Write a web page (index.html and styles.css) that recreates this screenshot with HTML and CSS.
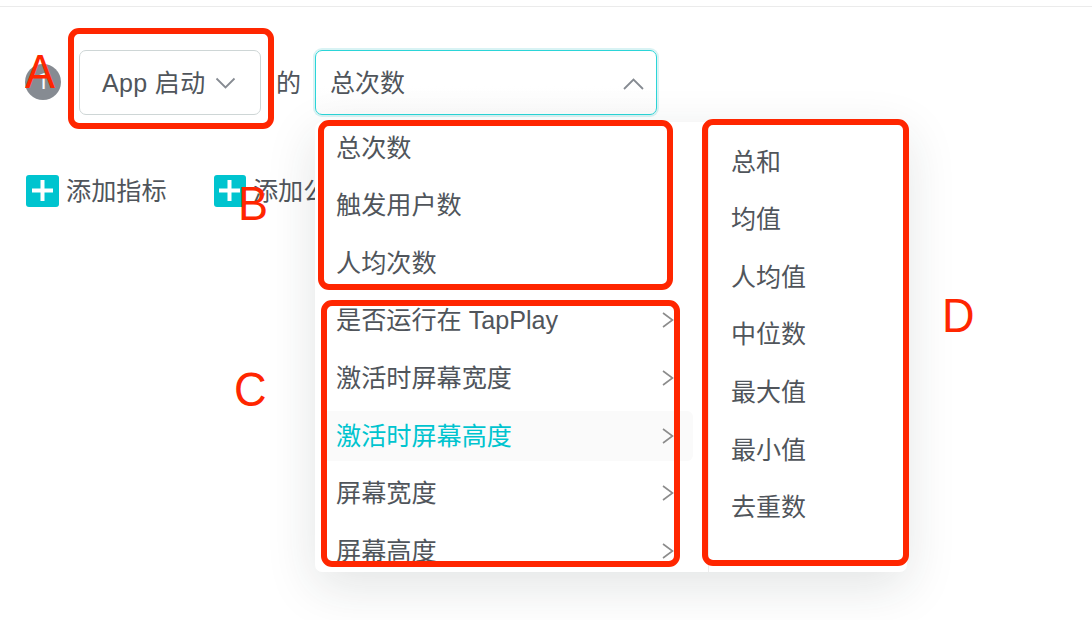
FILE: index.html
```html
<!DOCTYPE html>
<html lang="zh-CN">
<head>
<meta charset="utf-8">
<title>指标</title>
<link rel="stylesheet" href="styles.css">
</head>
<body>
<main class="panel">
  <div class="metric-row">
    <span class="badge">1</span>
    <div class="select select-event">
      <span>App 启动</span>
      <svg class="chevron" width="21" height="14" viewBox="0 0 21 14"><path d="M1.500 2.500 L10.500 11.500 L19.500 2.500"/></svg>
    </div>
    <span class="of">的</span>
    <div class="select select-measure">
      <span>总次数</span>
      <svg class="chevron" width="21" height="14" viewBox="0 0 21 14"><path d="M1 13 L10.500 3.500 L20 13"/></svg>
    </div>
  </div>
  <div class="add-row">
    <div class="add"><svg width="33" height="33" viewBox="0 0 33 33"><rect width="33" height="32" rx="3" fill="#00c4cf"/><path d="M6 15.500H27M16.500 5V26" stroke="#fff" stroke-width="4"/></svg><span>添加指标</span></div>
    <div class="add"><svg width="32" height="33" viewBox="0 0 32 33"><rect width="32" height="32" rx="3" fill="#00c4cf"/><path d="M5 15.500H26M15.500 5V26" stroke="#fff" stroke-width="4"/></svg><span>添加公式</span></div>
  </div>
</main>

<div class="dropdown">
  <ul class="options">
    <li class="option">总次数</li>
    <li class="option">触发用户数</li>
    <li class="option">人均次数</li>
    <li class="option">是否运行在 TapPlay<svg class="arrow" width="12" height="16" viewBox="0 0 12 16"><path d="M1 1L10.500 8L1 15"/></svg></li>
    <li class="option">激活时屏幕宽度<svg class="arrow" width="12" height="16" viewBox="0 0 12 16"><path d="M1 1L10.500 8L1 15"/></svg></li>
    <li class="option active">激活时屏幕高度<svg class="arrow" width="12" height="16" viewBox="0 0 12 16"><path d="M1 1L10.500 8L1 15"/></svg></li>
    <li class="option">屏幕宽度<svg class="arrow" width="12" height="16" viewBox="0 0 12 16"><path d="M1 1L10.500 8L1 15"/></svg></li>
    <li class="option">屏幕高度<svg class="arrow" width="12" height="16" viewBox="0 0 12 16"><path d="M1 1L10.500 8L1 15"/></svg></li>
  </ul>
  <ul class="aggregates">
    <li class="option">总和</li>
    <li class="option">均值</li>
    <li class="option">人均值</li>
    <li class="option">中位数</li>
    <li class="option">最大值</li>
    <li class="option">最小值</li>
    <li class="option">去重数</li>
  </ul>
</div>

<div class="mark mark-a"></div>
<div class="mark mark-b"></div>
<div class="mark mark-c"></div>
<div class="mark mark-d"></div>
<span class="letter letter-a">A</span>
<span class="letter letter-b">B</span>
<span class="letter letter-c">C</span>
<span class="letter letter-d">D</span>
</body>
</html>
```
FILE: styles.css
```css
* { box-sizing: border-box; }

body {
  position: relative;
  margin: 0;
  width: 1092px;
  height: 620px;
  overflow: hidden;
  background: #fff;
  color: #50555b;
  font: 25px/36px "Liberation Sans", "Noto Sans CJK SC", sans-serif;
}

.panel {
  margin-top: 6px;
  padding: 43px 25px 0;
  border-top: 1px solid #ebebeb;
}

.metric-row {
  display: flex;
  align-items: center;
  height: 65px;
}

.badge {
  width: 36px;
  height: 36px;
  margin: -2px 18px 0 0;
  border-radius: 50%;
  background: #868b92;
  color: #fff;
  font-family: Roboto, sans-serif;
  font-size: 22px;
  text-align: center;
}

.select {
  display: flex;
  align-items: center;
  justify-content: space-between;
  height: 65px;
  border: 1px solid #ced6d6;
  border-radius: 7px;
}

.select-event {
  width: 182px;
  padding: 0 24px 0 22px;
  letter-spacing: .35px;
}

.of {
  width: 25px;
  margin: 0 14px 0 15px;
}

.select-measure {
  width: 342px;
  padding: 0 12px 0 14px;
  border-color: #2bd5d8;
  background: linear-gradient(#fff 55%, #fcfcfc);
  box-shadow: 0 0 0 2px #d9f3f4;
}

.chevron {
  fill: none;
  stroke: #868b92;
  stroke-width: 1.8;
}

.add-row {
  display: flex;
  gap: 47.4px;
  margin-top: 58px;
  padding-left: 1px;
  font-size: 25.15px;
}

.add {
  display: flex;
  align-items: center;
  gap: 7px;
  height: 36px;
  white-space: nowrap;
}

.dropdown {
  position: absolute;
  left: 315px;
  top: 122px;
  display: flex;
  width: 592px;
  height: 450px;
  border-radius: 7px;
  background: #fff;
  box-shadow: 0 14px 50px rgba(30, 45, 45, .13);
}

ul {
  display: flex;
  flex-direction: column;
  gap: 7.6px;
  margin: 0;
  list-style: none;
  overflow: hidden;
}

.options {
  width: 394px;
  padding: .7px 15px 0 7px;
  border-right: 1px solid #ececec;
  font-size: 25.15px;
}

.aggregates {
  flex: 1;
  padding: 14.7px 8px 0;
}

.option {
  display: flex;
  flex: none;
  align-items: center;
  justify-content: space-between;
  height: 50px;
  padding: 0 19px 0 14px;
  border-radius: 6px;
}

.active {
  background: #fafafa;
  color: #00c4cf;
}

.arrow {
  fill: none;
  stroke: #8c8c8c;
  stroke-width: 1.6;
}

.mark {
  position: absolute;
  border: 6px solid #ff2600;
  border-radius: 11px;
}

.mark-a { left: 68px; top: 28px; width: 206px; height: 101px; }
.mark-b { left: 318px; top: 120px; width: 355px; height: 170px; }
.mark-c { left: 321px; top: 300px; width: 359px; height: 267px; }
.mark-d { left: 702px; top: 119px; width: 207px; height: 447px; }

.letter {
  position: absolute;
  color: #ff2600;
  font-size: 49px;
  line-height: 54px;
  transform: scaleX(.92);
  transform-origin: 0 0;
}

.letter-a { left: 25px; top: 44px; }
.letter-b { left: 238px; top: 176px; }
.letter-c { left: 234px; top: 362px; }
.letter-d { left: 942px; top: 288px; }
```
